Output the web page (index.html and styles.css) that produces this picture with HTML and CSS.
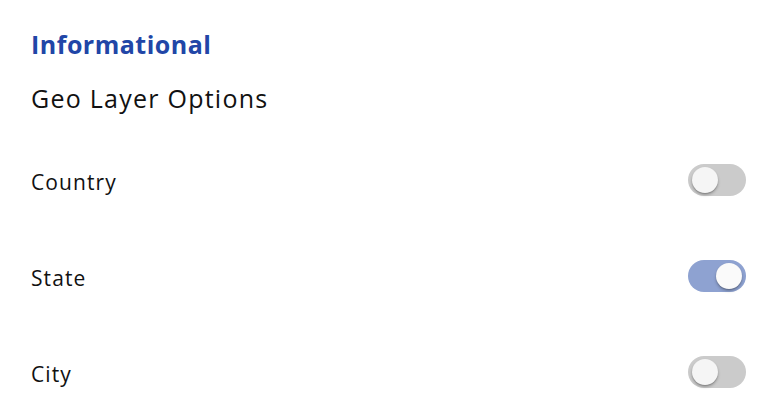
FILE: index.html
```html
<!DOCTYPE html>
<html>
<head>
<meta charset="utf-8">
<link rel="stylesheet" href="styles.css">
</head>
<body>
<div class="panel">
  <h2 class="section-title">Informational</h2>
  <h3 class="subtitle">Geo Layer Options</h3>
  <ul class="options">
    <li class="option"><span class="label">Country</span><span class="switch"><span class="thumb"></span></span></li>
    <li class="option"><span class="label">State</span><span class="switch on"><span class="thumb"></span></span></li>
    <li class="option"><span class="label">City</span><span class="switch"><span class="thumb"></span></span></li>
  </ul>
</div>
</body>
</html>
```
FILE: styles.css
```css
html, body {
  margin: 0;
  padding: 0;
  background: #fff;
}
body {
  font-family: "Open Sans", "Lato", sans-serif;
  color: #111;
  width: 766px;
  height: 420px;
  overflow: hidden;
}
.panel {
  padding: 28px 20px 0 31px;
}
.section-title {
  margin: 0;
  font-size: 25px;
  font-weight: 700;
  letter-spacing: 0.5px;
  color: #2146a7;
  line-height: 32px;
}
.subtitle {
  margin: 22px 0 0;
  font-size: 25px;
  font-weight: 400;
  letter-spacing: 1.25px;
  line-height: 32px;
  color: #111;
}
.options {
  list-style: none;
  margin: 49px 0 0;
  padding: 0;
  display: flex;
  flex-direction: column;
  gap: 63px;
}
.option {
  display: flex;
  align-items: center;
  justify-content: space-between;
  height: 33px;
}
.label {
  font-size: 21px;
  letter-spacing: 1.1px;
  color: #111;
  position: relative;
  top: 2px;
}
.switch {
  position: relative;
  width: 58px;
  height: 32px;
  border-radius: 16px;
  background: #cbcbcb;
  display: flex;
  align-items: center;
  padding: 0 4px;
  box-sizing: border-box;
}
.switch.on {
  background: #8ea2d1;
  justify-content: flex-end;
}
.thumb {
  width: 26px;
  height: 26px;
  border-radius: 50%;
  background: #f5f5f5;
  box-shadow: 0 2px 3px rgba(0,0,0,0.25), 0 1px 1px rgba(0,0,0,0.14);
}
.switch.on .thumb {
  background: #fafafa;
}
```
